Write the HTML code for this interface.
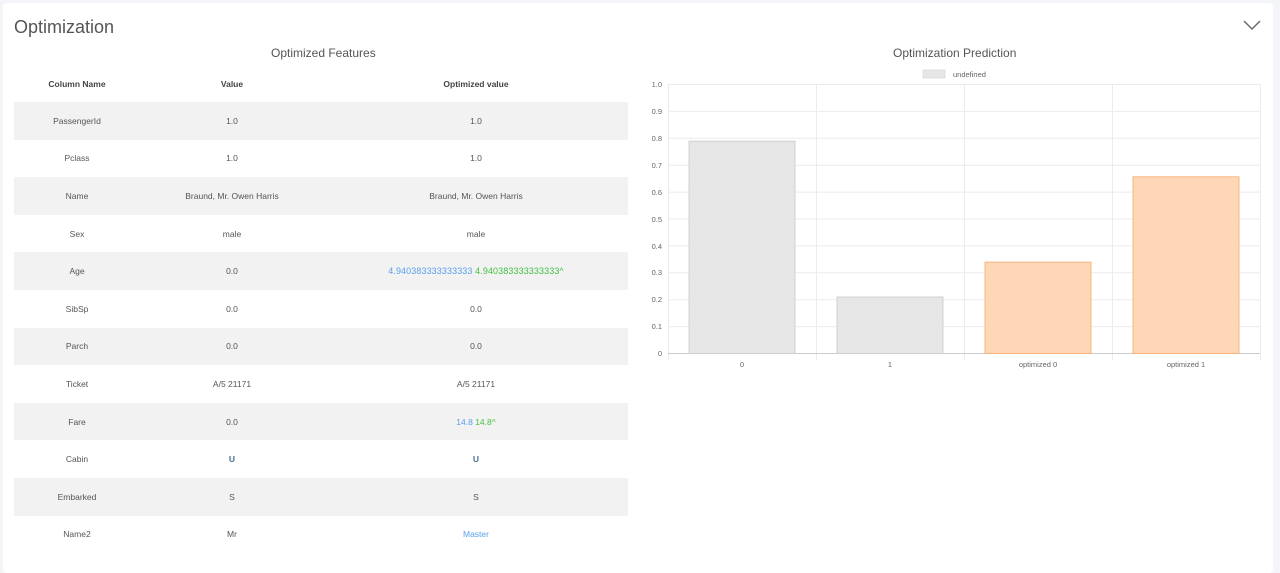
<!DOCTYPE html>
<html><head><meta charset="utf-8"><style>
body{margin:0;width:1280px;height:562px;background:#f4f5f8;font-family:"Liberation Sans",sans-serif;overflow:hidden;position:relative}
.card{position:absolute;left:3px;top:3px;width:1270px;height:570px;background:#fff;border-radius:4px}
h1{position:absolute;left:14px;top:17px;margin:0;font-weight:normal;font-size:18px;color:#555}
.sub{position:absolute;font-size:12px;color:#555}
table{position:absolute;left:14px;top:65px;width:614px;border-collapse:collapse;font-size:8.5px;color:#555}
td,th{text-align:center;height:37.6px;padding:0}
th{font-weight:bold;color:#444;height:37px}
tr.g td{background:#f2f2f2}
.b{color:#5aa0ee}.gr{color:#43c043}
.w{font-size:9px;letter-spacing:0.1px}
.u{color:#4a6f95;font-weight:bold}
</style></head><body>
<div class="card"></div>
<h1>Optimization</h1>
<svg style="position:absolute;left:1243px;top:20px" width="20" height="12"><path d="M1 1 L9 9 L17 1" fill="none" stroke="#666" stroke-width="1.4"/></svg>
<div class="sub" style="left:271px;top:46px">Optimized Features</div>
<div class="sub" style="left:893px;top:46px">Optimization Prediction</div>
<table>
<colgroup><col style="width:126px"><col style="width:184px"><col></colgroup>
<tr><th>Column Name</th><th>Value</th><th>Optimized value</th></tr>
<tr class="g"><td>PassengerId</td><td>1.0</td><td>1.0</td></tr>
<tr><td>Pclass</td><td>1.0</td><td>1.0</td></tr>
<tr class="g"><td>Name</td><td>Braund, Mr. Owen Harris</td><td>Braund, Mr. Owen Harris</td></tr>
<tr><td>Sex</td><td>male</td><td>male</td></tr>
<tr class="g"><td>Age</td><td>0.0</td><td class="w"><span class="b">4.940383333333333</span> <span class="gr">4.940383333333333^</span></td></tr>
<tr><td>SibSp</td><td>0.0</td><td>0.0</td></tr>
<tr class="g"><td>Parch</td><td>0.0</td><td>0.0</td></tr>
<tr><td>Ticket</td><td>A/5 21171</td><td>A/5 21171</td></tr>
<tr class="g"><td>Fare</td><td>0.0</td><td><span class="b">14.8</span> <span class="gr">14.8^</span></td></tr>
<tr><td>Cabin</td><td class="u">U</td><td class="u">U</td></tr>
<tr class="g"><td>Embarked</td><td>S</td><td>S</td></tr>
<tr><td>Name2</td><td>Mr</td><td class="b">Master</td></tr>
</table>
<svg style="position:absolute;left:640px;top:60px" width="640" height="320" font-family="Liberation Sans" font-size="7.5" fill="#666">
<rect x="283" y="10" width="22" height="8" fill="#e6e6e6" stroke="#ccc" stroke-width="0.5"/>
<text x="313" y="17">undefined</text>
<g stroke="#ebebeb" stroke-width="1">
<line x1="28" y1="24.5" x2="620" y2="24.5"/><line x1="28" y1="51.4" x2="620" y2="51.4"/><line x1="28" y1="78.3" x2="620" y2="78.3"/><line x1="28" y1="105.2" x2="620" y2="105.2"/><line x1="28" y1="132.1" x2="620" y2="132.1"/><line x1="28" y1="159" x2="620" y2="159"/><line x1="28" y1="185.9" x2="620" y2="185.9"/><line x1="28" y1="212.8" x2="620" y2="212.8"/><line x1="28" y1="239.7" x2="620" y2="239.7"/><line x1="28" y1="266.6" x2="620" y2="266.6"/>
<line x1="28.5" y1="24" x2="28.5" y2="300"/><line x1="176.5" y1="24" x2="176.5" y2="300"/><line x1="324.5" y1="24" x2="324.5" y2="300"/><line x1="472.5" y1="24" x2="472.5" y2="300"/><line x1="620.5" y1="24" x2="620.5" y2="300"/>
</g>
<line x1="28" y1="293.5" x2="620" y2="293.5" stroke="#ccc"/>
<rect x="49" y="81.2" width="106" height="212.3" fill="#e6e6e6" stroke="#d0d0d0"/>
<rect x="197" y="237" width="106" height="56.5" fill="#e6e6e6" stroke="#d0d0d0"/>
<rect x="345" y="202.1" width="106" height="91.4" fill="#fed8b6" stroke="#f8b57e"/>
<rect x="493" y="116.8" width="106" height="176.7" fill="#fed8b6" stroke="#f8b57e"/>
<g text-anchor="end">
<text x="22" y="27">1.0</text><text x="22" y="54">0.9</text><text x="22" y="81">0.8</text><text x="22" y="108">0.7</text><text x="22" y="135">0.6</text><text x="22" y="162">0.5</text><text x="22" y="189">0.4</text><text x="22" y="215">0.3</text><text x="22" y="242">0.2</text><text x="22" y="269">0.1</text><text x="22" y="296">0</text>
</g>
<g text-anchor="middle">
<text x="102" y="307">0</text><text x="250" y="307">1</text><text x="398" y="307">optimized 0</text><text x="546" y="307">optimized 1</text>
</g>
</svg>
</body></html>
